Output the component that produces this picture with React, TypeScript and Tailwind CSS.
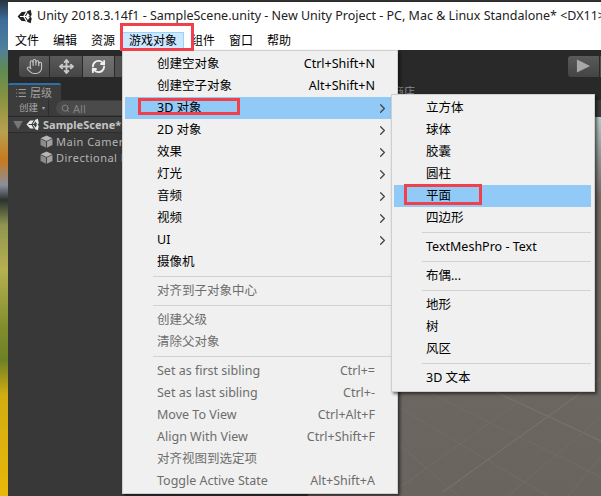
import { ChevronRight, Hand, List, Move, RefreshCw, Search } from "lucide-react";

type Item = { label?: string; keys?: string; sub?: boolean; off?: boolean; on?: boolean; sep?: boolean };

const mainItems: Item[] = [
  { label: "创建空对象", keys: "Ctrl+Shift+N" },
  { label: "创建空子对象", keys: "Alt+Shift+N" },
  { label: "3D 对象", sub: true, on: true },
  { label: "2D 对象", sub: true },
  { label: "效果", sub: true },
  { label: "灯光", sub: true },
  { label: "音频", sub: true },
  { label: "视频", sub: true },
  { label: "UI", sub: true },
  { label: "摄像机" },
  { sep: true },
  { label: "对齐到子对象中心", off: true },
  { sep: true },
  { label: "创建父级", off: true },
  { label: "清除父对象", off: true },
  { sep: true },
  { label: "Set as first sibling", keys: "Ctrl+=", off: true },
  { label: "Set as last sibling", keys: "Ctrl+-", off: true },
  { label: "Move To View", keys: "Ctrl+Alt+F", off: true },
  { label: "Align With View", keys: "Ctrl+Shift+F", off: true },
  { label: "对齐视图到选定项", off: true },
  { label: "Toggle Active State", keys: "Alt+Shift+A", off: true },
];

const subItems: Item[] = [
  { label: "立方体" },
  { label: "球体" },
  { label: "胶囊" },
  { label: "圆柱" },
  { label: "平面", on: true },
  { label: "四边形" },
  { sep: true },
  { label: "TextMeshPro - Text" },
  { sep: true },
  { label: "布偶..." },
  { sep: true },
  { label: "地形" },
  { label: "树" },
  { label: "风区" },
  { sep: true },
  { label: "3D 文本" },
];

function MenuRows({ items }: { items: Item[] }) {
  return (
    <>
      {items.map((it, i) =>
        it.sep ? (
          <div key={i} className="h-[7px] flex items-center pl-[28px]">
            <div className="h-px w-full bg-[#d2d2d2]" />
          </div>
        ) : (
          <div
            key={i}
            className={`relative h-[22px] flex items-center pl-[32px] ${it.on ? "bg-[#91c9f7]" : ""} ${
              it.off ? "text-[#6d6d6d]" : "text-black"
            }`}
          >
            <span className="flex-1 whitespace-nowrap">{it.label}</span>
            {it.keys && <span className="absolute right-[21px]">{it.keys}</span>}
            {it.sub && <ChevronRight className="absolute right-[6px] w-[15px] h-[15px] text-[#444444]" strokeWidth={2} />}
          </div>
        )
      )}
    </>
  );
}

function Cube({ className }: { className: string }) {
  return (
    <svg viewBox="0 0 12 12" className={className}>
      <path d="M6 0.5 L11.5 3 L6 5.5 L0.5 3 Z" fill="#b5b5b5" />
      <path d="M0.5 3.6 L5.6 6 V11.8 L0.5 9.2 Z" fill="#8c8c8c" />
      <path d="M11.5 3.6 L6.4 6 V11.8 L11.5 9.2 Z" fill="#a0a0a0" />
    </svg>
  );
}

// old three-pointed unity mark, slits are painted in the colour behind it
function UnityLogo({ className, color, bg }: { className: string; color: string; bg: string }) {
  return (
    <svg viewBox="0 0 16 16" className={className}>
      <path d="M0.6 8 L5 3.2 L9.5 3 L14.6 0.8 L15.7 6 L14.4 8 L15.7 10 L14.6 15.2 L9.5 13 L5 12.8 Z" fill={color} />
      <path d="M3.2 8 H7.2 L10.6 2.6 M7.2 8 L10.6 13.4 M7.2 8 H12.4" fill="none" stroke={bg} strokeWidth="1.3" />
      <path d="M11.6 4.2 L13.8 7.6 H9.4 Z M11.6 11.8 L13.8 8.4 H9.4 Z" fill={bg} />
    </svg>
  );
}

const menuBar = ["文件", "编辑", "资源", "游戏对象", "组件", "窗口", "帮助"];

export default function App() {
  return (
    <div
      className="relative w-[601px] h-[496px] overflow-hidden flex bg-[#323232] text-[12px] leading-none"
      style={{ fontFamily: '"Noto Sans", "Noto Sans CJK SC", sans-serif' }}
    >
      {/* desktop showing behind the window */}
      <div className="w-[8px] shrink-0 bg-[linear-gradient(to_bottom,#26343f_0px,#3c6d9b_20px,#4f7f9c_48px,#5f8a52_70px,#8a9440_100px,#b9a050_132px,#c77a1f_160px,#8a8f9a_185px,#2b3230_200px,#8f9550_225px,#b7b050_270px,#7f8c2c_330px,#6d8025_360px,#d2ad10_395px,#e8b70a_496px)]" />

      <div className="flex-1 flex flex-col min-w-0">
        {/* title bar */}
        <div className="h-[30px] mt-px border-t border-[#2a2a2a] bg-white flex items-center pl-[9px] gap-[4px] text-[12.5px] text-[#222222] whitespace-nowrap overflow-hidden">
          <UnityLogo className="w-[15px] h-[15px] shrink-0" color="#222222" bg="#ffffff" />
          <span className="ml-[1px]">Unity 2018.3.14f1 - SampleScene.unity - New Unity Project - PC, Mac &amp; Linux Standalone* &lt;DX11&gt;</span>
        </div>

        {/* menu bar */}
        <div className="h-[19px] bg-white flex items-center text-black text-[12px]">
          {menuBar.map((m) =>
            m === "游戏对象" ? (
              <span key={m} className="w-[62px] h-[17px] flex items-center justify-center bg-[#cce8ff] border border-[#99d1ff]">
                {m}
              </span>
            ) : (
              <span key={m} className="px-[7px]">
                {m}
              </span>
            )
          )}
        </div>

        {/* toolbar */}
        <div className="h-[32px] bg-[#292929] flex items-center pl-[11px] justify-between">
          <div className="flex h-[21px] gap-px">
            <div className="w-[30px] rounded-l-[3px] bg-gradient-to-b from-[#5a5a5a] to-[#444444] flex items-center justify-center text-[#c8c8c8]">
              <Hand className="w-[17px] h-[17px]" strokeWidth={1.5} />
            </div>
            <div className="w-[32px] bg-gradient-to-b from-[#5a5a5a] to-[#444444] flex items-center justify-center text-[#c8c8c8]">
              <Move className="w-[15px] h-[15px]" strokeWidth={3} />
            </div>
            <div className="w-[31px] bg-gradient-to-b from-[#727272] to-[#606060] flex items-center justify-center text-[#f0f0f0]">
              <RefreshCw className="w-[15px] h-[15px]" strokeWidth={3} />
            </div>
            <div className="w-[20px] bg-[#505050]" />
          </div>
          <div className="flex h-[21px] gap-px">
            <div className="w-[31px] bg-gradient-to-b from-[#5a5a5a] to-[#444444] rounded-l-[3px] flex items-center justify-center">
              <svg viewBox="0 0 16 14" className="w-[15px] h-[14px]">
                <path d="M1 0 L15 7 L1 14 Z" fill="#a8a8a8" />
              </svg>
            </div>
            <div className="w-px bg-[#505050]" />
          </div>
        </div>

        <div className="flex-1 flex min-h-0">
          {/* hierarchy panel */}
          <div className="w-[300px] shrink-0 bg-[#383838] flex flex-col text-[#b4b4b4]">
            <div className="h-[18px] bg-[#292929] flex items-end">
              <div className="w-[53px] h-[17px] bg-[#3c3c3c] border-t-2 border-[#2d6fa8] rounded-t-[2px] flex items-center pl-[7px] gap-[3px] text-[11px] text-[#a0a0a0]">
                <List className="w-[12px] h-[12px]" strokeWidth={2} />
                <span>层级</span>
              </div>
            </div>
            <div className="h-[17px] bg-[#3c3c3c] border-b border-[#282828] flex items-center pl-[11px] text-[9.5px] text-[#a8a8a8]">
              <span>创建</span>
              <span className="ml-[4px] text-[6px]">▾</span>
              <div className="ml-[3px] h-full w-px bg-[#2e2e2e]" />
              <div className="ml-[7px] h-[14px] w-[120px] rounded-full bg-[#4a4a4a] flex items-center pl-[5px] gap-[3px] text-[11px] text-[#858585]">
                <Search className="w-[9px] h-[9px]" strokeWidth={2.5} />
                <span>All</span>
              </div>
            </div>
            <div className="h-[16px] bg-[#3e3e3e] border-b border-[#2c2c2c] flex items-center pl-[5px] gap-[3px] font-bold text-[11px] text-[#c4c4c4]">
              <span className="text-[10px] text-[#777777]">▼</span>
              <UnityLogo className="w-[13px] h-[13px]" color="#ececec" bg="#3e3e3e" />
              <span className="ml-[1px]">SampleScene*</span>
            </div>
            <div className="h-[16px] flex items-center pl-[32px] gap-[3px] text-[11px] tracking-[0.5px] whitespace-nowrap">
              <Cube className="w-[13px] h-[13px]" />
              <span>Main Camera</span>
            </div>
            <div className="h-[16px] flex items-center pl-[32px] gap-[3px] text-[11px] tracking-[0.5px] whitespace-nowrap">
              <Cube className="w-[13px] h-[13px]" />
              <span>Directional Light</span>
            </div>
          </div>

          {/* scene view */}
          <div className="flex-1 flex flex-col min-w-0">
            <div className="h-[18px] bg-[#292929] pl-[63px] flex items-center text-[11px] text-[#8a8a8a]">
              <span>资源商店</span>
            </div>
            <div className="h-[17px] bg-[#3b3b3b]" />
            <div className="flex-1 relative bg-[linear-gradient(to_bottom,#b4cccb_0px,#8f9593_40px,#716b65_80px,#6a645e_100%)] overflow-hidden">
              <svg viewBox="0 0 293 379" className="absolute inset-0 w-full h-full" fill="none" stroke="#7b756f" strokeWidth="1">
                <path d="M179 271 L293 324 M292 262 L135 375" />
                <path d="M90 290 L240 379 M60 300 L150 379 M110 270 L293 360 M293 300 L200 379 M230 271 L80 379 M293 340 L260 379" stroke="#726c66" />
              </svg>
            </div>
          </div>
        </div>
      </div>

      {/* main dropdown */}
      <div className="absolute left-[122px] top-[50px] w-[276px] h-[444px] bg-[#f0f0f0] border border-[#cfcfcf] shadow-[2px_2px_3px_rgba(0,0,0,0.55)] py-[2px] pl-[2px] pr-[1px] text-[12.5px]">
        <MenuRows items={mainItems} />
      </div>

      {/* 3D object submenu */}
      <div className="absolute left-[391px] top-[94px] w-[204px] h-[298px] bg-[#f0f0f0] border border-[#cfcfcf] shadow-[2px_2px_3px_rgba(0,0,0,0.55)] py-[2px] pl-[2px] pr-[3px] text-[12.5px]">
        <MenuRows items={subItems} />
      </div>

      {/* red callouts added on top of the screenshot */}
      <div className="absolute left-[120px] top-[23px] w-[74px] h-[28px] border-[3px] border-[#f0404a]" />
      <div className="absolute left-[138px] top-[98px] w-[102px] h-[17px] border-[3px] border-[#f0404a]" />
      <div className="absolute left-[404px] top-[184px] w-[78px] h-[21px] border-[3px] border-[#f0404a]" />
    </div>
  );
}
